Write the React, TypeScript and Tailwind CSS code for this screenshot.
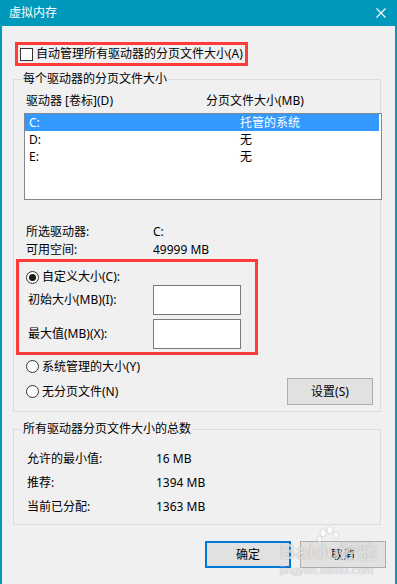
import React from "react";

const font = "font-['Noto_Sans','Noto_Sans_CJK_SC',sans-serif]";

function Radio({ checked }: { checked?: boolean }) {
  return (
    <span className="flex h-[13px] w-[13px] shrink-0 items-center justify-center rounded-full border border-[#333] bg-white">
      {checked && <span className="h-[7px] w-[7px] rounded-full bg-[#1a1a1a]" />}
    </span>
  );
}

const drives = [
  { d: "C:", size: "托管的系统", selected: true },
  { d: "D:", size: "无" },
  { d: "E:", size: "无" },
];

const totals = [
  { label: "允许的最小值:", value: "16 MB" },
  { label: "推荐:", value: "1394 MB" },
  { label: "当前已分配:", value: "1363 MB" },
];

export default function App() {
  return (
    <div className={`relative h-[584px] w-[397px] overflow-hidden border-x-2 border-[#0099bc] bg-[#f0f0f0] text-[12px] text-black ${font}`}>
      {/* Title bar */}
      <div className="-mx-[2px] flex h-[26px] items-center justify-between bg-[#0099bc] pl-[9px] pr-[11px] text-white">
        <span className="leading-[16px]">虚拟内存</span>
        <svg width="10" height="10" viewBox="0 0 10 10" className="mb-[1px]">
          <path d="M0.5 0.5L9.5 9.5M9.5 0.5L0.5 9.5" stroke="white" strokeWidth="1.1" />
        </svg>
      </div>

      {/* Auto manage checkbox */}
      <div className="ml-[13px] mt-[16px] flex h-[24px] w-fit items-center gap-[3px] whitespace-nowrap border-[3px] border-[#ff3b3b] pl-[2px] pr-[2px]">
        <span className="h-[13px] w-[13px] shrink-0 border border-[#333] bg-white" />
        <span className="leading-[16px]">自动管理所有驱动器的分页文件大小(A)</span>
      </div>

      {/* Per-drive group */}
      <fieldset className="ml-[11px] mt-[5px] w-[368px] border border-[#dcdcdc]">
        <legend className="ml-[8px] px-[1px] leading-[16px]">每个驱动器的分页文件大小</legend>
        <div className="flex pl-[12px] pt-[6px] leading-[16px]">
          <span className="w-[180px]">驱动器 [卷标](D)</span>
          <span>分页文件大小(MB)</span>
        </div>
        <div className="-mr-[2px] ml-[10px] mt-[4px] h-[87px] border border-[#828790] bg-white">
          {drives.map((r) => (
            <div
              key={r.d}
              className={`mr-[2px] flex h-[17px] items-center pl-[4px] leading-[16px] ${r.selected ? "bg-[#3399ff] text-white" : ""}`}
            >
              <span className="w-[211px]">{r.d}</span>
              <span>{r.size}</span>
            </div>
          ))}
        </div>
        <div className="mt-[23px] pl-[12px] leading-[18px]">
          <div className="flex">
            <span className="w-[127px]">所选驱动器:</span>
            <span>C:</span>
          </div>
          <div className="flex">
            <span className="w-[127px]">可用空间:</span>
            <span>49999 MB</span>
          </div>
        </div>

        {/* Custom size */}
        <div className="ml-[2px] w-[242px] border-[3px] border-[#ff3b3b] pb-[3px] pt-[7px]">
          <div className="flex h-[16px] items-center gap-[3px] pl-[7px] leading-[16px]">
            <Radio checked />
            <span>自定义大小(C):</span>
          </div>
          <div className="flex h-[30px] items-center pl-[9px] leading-[16px]">
            <span className="w-[125px]">初始大小(MB)(I):</span>
            <span className="h-[30px] w-[88px] border border-[#7a7a7a] bg-white" />
          </div>
          <div className="mt-[4px] flex h-[30px] items-center pl-[9px] leading-[16px]">
            <span className="w-[125px]">最大值(MB)(X):</span>
            <span className="h-[30px] w-[88px] border border-[#7a7a7a] bg-white" />
          </div>
        </div>

        <div className="mt-[3px] flex h-[17px] items-center gap-[3px] pl-[12px] leading-[16px]">
          <Radio />
          <span>系统管理的大小(Y)</span>
        </div>
        <div className="mb-[6px] mt-[3px] flex h-[27px] items-center justify-between pl-[12px] pr-[7px]">
          <div className="flex items-center gap-[3px] leading-[16px]">
            <Radio />
            <span>无分页文件(N)</span>
          </div>
          <button className="h-[27px] w-[86px] border border-[#adadad] bg-[#e1e1e1] leading-[16px]">设置(S)</button>
        </div>
      </fieldset>

      {/* Totals group */}
      <fieldset className="ml-[11px] mt-[9px] w-[368px] border border-[#dcdcdc] pb-[5px] pt-[10px]">
        <legend className="ml-[8px] px-[1px] leading-[16px]">所有驱动器分页文件大小的总数</legend>
        {totals.map((t) => (
          <div key={t.label} className="flex h-[24px] items-center pl-[13px] leading-[16px]">
            <span className="w-[129px]">{t.label}</span>
            <span>{t.value}</span>
          </div>
        ))}
      </fieldset>

      {/* Dialog buttons */}
      <div className="mt-[16px] flex justify-end gap-[9px] pr-[9px]">
        <button className="h-[27px] w-[86px] border-2 border-[#0078d7] bg-[#e1e1e1] leading-[16px]">确定</button>
        <button className="h-[27px] w-[86px] border border-[#adadad] bg-[#e1e1e1] leading-[16px]">取消</button>
      </div>

      {/* Baidu watermark */}
      <div className="pointer-events-none absolute left-[278px] top-[526px] flex flex-col text-white/70 [text-shadow:0_0_1px_rgba(0,0,0,0.35)]">
        <div className="relative flex items-end pt-[14px]">
          <span className="font-['Liberation_Sans',sans-serif] text-[22px] font-bold leading-[24px]">Bai</span>
          <svg width="26" height="26" viewBox="0 0 26 26" className="absolute left-[36px] top-[0px] opacity-80">
            <g fill="white" stroke="rgba(0,0,0,0.25)" strokeWidth="0.6">
              <ellipse cx="7" cy="7" rx="3" ry="4" />
              <ellipse cx="14" cy="4" rx="3" ry="4" />
              <ellipse cx="20" cy="9" rx="2.6" ry="3.4" />
              <ellipse cx="3.5" cy="13" rx="2.4" ry="3" />
            </g>
          </svg>
          <span className="font-['Liberation_Sans',sans-serif] text-[20px] font-bold leading-[24px]">du</span>
          <span className="text-[19px] font-bold leading-[24px]">经验</span>
        </div>
        <span className="font-['Liberation_Sans',sans-serif] text-[11px] leading-[13px] tracking-[0.3px]">jingyan.baidu.com</span>
      </div>
    </div>
  );
}
